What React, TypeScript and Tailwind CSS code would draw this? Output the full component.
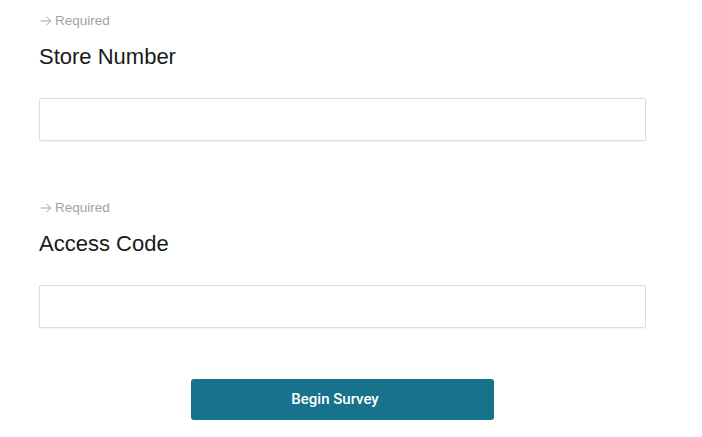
export default function App() {
  const fields = ["Store Number", "Access Code"]

  return (
    <div className="min-h-screen bg-white font-['Liberation_Sans',Arial,sans-serif]">
      <div className="w-[607px] ml-[39px] pt-[13px]">
        {fields.map((label, i) => (
          <div key={label} className={i > 0 ? "mt-[59px]" : ""}>
            <div className="flex items-center gap-[3px] text-[13.5px] leading-4 text-[#a3a3a3]">
              <svg width="12" height="10" viewBox="0 0 12 10" fill="none" stroke="#a3a3a3" strokeWidth="1" className="ml-[1px]">
                <path d="M0.5 5h10.5M6.5 0.8l4.2 4.2-4.2 4.2" />
              </svg>
              <span>Required</span>
            </div>
            <label className="block mt-[14px] text-[22px] leading-7 text-[#1a1a1a]">{label}</label>
            <input
              type="text"
              className="block mt-[27px] w-full h-[43px] border border-[#dcdcdc] rounded-[2px] shadow-[0_1px_2px_rgba(0,0,0,0.06)] outline-none px-3"
            />
          </div>
        ))}
        <div className="flex justify-center mt-[51px]">
          <button className="w-[303px] h-[41px] pr-[15px] rounded-[3px] bg-[#16738b] text-white text-[15px] font-medium font-['Roboto',Arial,sans-serif]">
            Begin Survey
          </button>
        </div>
      </div>
    </div>
  )
}
